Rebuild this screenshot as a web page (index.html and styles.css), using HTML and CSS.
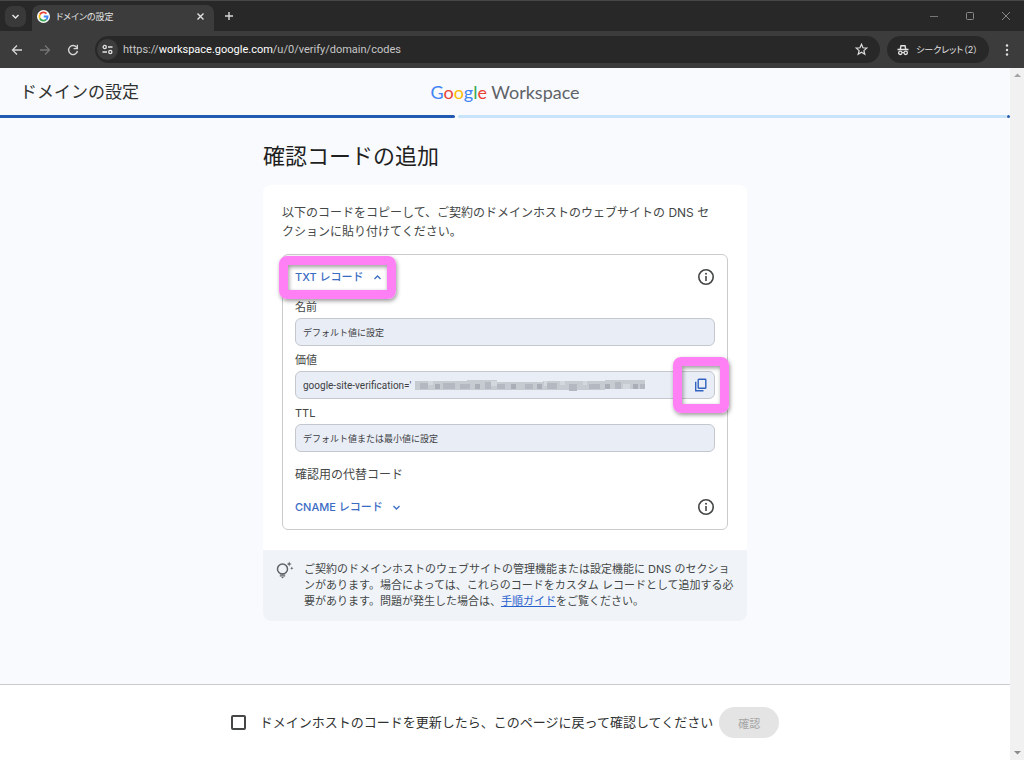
FILE: index.html
```html
<!DOCTYPE html>
<html lang="ja">
<head>
<meta charset="utf-8">
<title>ドメインの設定</title>
<link rel="stylesheet" href="styles.css">
</head>
<body>
<div class="tabstrip">
  <button class="tab-search" aria-label="タブを検索"><svg width="9" height="9" viewBox="0 0 9 9"><path d="M1.500 3l3 3 3-3" fill="none" stroke="#e3e3e3" stroke-width="1.500"/></svg></button>
  <div class="tab">
    <svg class="favicon" width="13" height="13" viewBox="0 0 26 26"><circle cx="13" cy="13" r="13" fill="#fff"/><g fill="none" stroke-width="3.600"><path d="M19 7.400A8.200 8.200 0 0 0 5.800 9" stroke="#ea4335"/><path d="M5.800 9a8.200 8.200 0 0 0 0 8" stroke="#fbbc04"/><path d="M5.800 17a8.200 8.200 0 0 0 12.600 2.300" stroke="#34a853"/><path d="M18.400 19.300A8 8 0 0 0 21.200 13H13.500" stroke="#4285f4"/></g></svg>
    <span class="tab-title">ドメインの設定</span>
    <button class="plain" aria-label="タブを閉じる"><svg width="9" height="9" viewBox="0 0 9 9"><path d="M1.500 1.500l6 6M7.500 1.500l-6 6" stroke="#e3e3e3" stroke-width="1.400"/></svg></button>
  </div>
  <button class="plain new-tab" aria-label="新しいタブ"><svg width="10" height="10" viewBox="0 0 10 10"><path d="M5 1v8M1 5h8" stroke="#d8d8d8" stroke-width="1.400"/></svg></button>
  <div class="window-buttons">
    <button class="plain" aria-label="最小化"><svg width="10" height="10" viewBox="0 0 10 10"><path d="M1 5.500h8" stroke="#777"/></svg></button>
    <button class="plain" aria-label="最大化"><svg width="10" height="10" viewBox="0 0 10 10"><rect x="1.500" y="1.500" width="7" height="7" rx="1" fill="none" stroke="#888"/></svg></button>
    <button class="plain" aria-label="閉じる"><svg width="10" height="10" viewBox="0 0 10 10"><path d="M1 1l8 8M9 1L1 9" stroke="#888"/></svg></button>
  </div>
</div>
<div class="toolbar">
  <div class="nav-buttons">
    <button class="plain" aria-label="戻る"><svg width="12" height="12" viewBox="0 0 12 12"><path d="M11 6H1.800M6 1.500L1.500 6 6 10.500" fill="none" stroke="#d6d6d6" stroke-width="1.300"/></svg></button>
    <button class="plain" aria-label="進む"><svg width="12" height="12" viewBox="0 0 12 12"><path d="M1 6h9.200M6 1.500L10.500 6 6 10.500" fill="none" stroke="#757575" stroke-width="1.300"/></svg></button>
    <button class="plain" aria-label="再読み込み"><svg width="12" height="12" viewBox="0 0 12 12"><path d="M9.800 3.500A4.500 4.500 0 1 0 10.500 7" fill="none" stroke="#d6d6d6" stroke-width="1.400"/><path d="M11 .8v4.400H6.600V4h3.100V.8z" fill="#d6d6d6"/></svg></button>
  </div>
  <div class="address">
    <button class="site-info" aria-label="サイト情報"><svg width="11" height="11" viewBox="0 0 11 11" fill="none" stroke="#e3e3e3" stroke-width="1.300"><circle cx="2.700" cy="3" r="1.600"/><path d="M6 3h4.500M.5 8H5"/><circle cx="8.300" cy="8" r="1.600"/></svg></button>
    <div class="url"><span>https://</span><b>workspace.google.com</b><span>/u/0/verify/domain/codes</span></div>
    <button class="plain" aria-label="ブックマーク"><svg width="13" height="13" viewBox="0 0 13 13"><path d="M6.500 1.300l1.500 3.500 3.800.3-2.900 2.500.9 3.700-3.300-2-3.300 2 .9-3.700L1.200 5.100l3.800-.3z" fill="none" stroke="#dedede" stroke-width="1.200"/></svg></button>
  </div>
  <div class="incognito">
    <svg width="12" height="12" viewBox="0 0 12 12"><path d="M3.300 5L4 1.700h4L8.700 5M.5 5.500h11" fill="none" stroke="#e3e3e3" stroke-width="1.400"/><circle cx="3.300" cy="8.800" r="1.700" fill="none" stroke="#e3e3e3" stroke-width="1.300"/><circle cx="8.700" cy="8.800" r="1.700" fill="none" stroke="#e3e3e3" stroke-width="1.300"/><path d="M5 8.500h2" stroke="#e3e3e3"/></svg>
    <span>シークレット（2）</span>
  </div>
  <button class="plain more" aria-label="メニュー"><svg width="4" height="12" viewBox="0 0 4 12" fill="#e3e3e3"><circle cx="2" cy="1.500" r="1.200"/><circle cx="2" cy="6" r="1.200"/><circle cx="2" cy="10.500" r="1.200"/></svg></button>
</div>
<div class="viewport">
  <div class="page">
    <header class="header">
      <div class="header-title">ドメインの設定</div>
      <div class="logo"><span class="google"><span class="b">G</span><span class="r">o</span><span class="y">o</span><span class="b">g</span><span class="g">l</span><span class="r">e</span></span> Workspace</div>
    </header>
    <div class="progress"><div class="done"></div><div class="rest"></div><div class="dot"></div></div>
    <main class="main">
      <h1>確認コードの追加</h1>
      <section class="card">
        <div class="card-body">
          <p class="intro">以下のコードをコピーして、ご契約のドメインホストのウェブサイトの DNS セ<br>クションに貼り付けてください。</p>
          <div class="records">
            <div class="record-head">
              <button class="record-toggle" aria-expanded="true">TXT レコード<svg width="9" height="9" viewBox="0 0 9 9"><path d="M1.500 6l3-3 3 3" fill="none" stroke="#3a6cc4" stroke-width="1.300"/></svg><span class="highlight"></span></button>
              <button class="plain" aria-label="情報"><svg width="18" height="18" viewBox="0 0 18 18"><circle cx="9" cy="9" r="7.200" fill="none" stroke="#444746" stroke-width="1.600"/><path d="M9 8v5" stroke="#444746" stroke-width="1.600"/><circle cx="9" cy="5.700" r="1" fill="#444746"/></svg></button>
            </div>
            <div class="field-group">
              <label for="name">名前</label>
              <div class="field"><input id="name" readonly value="デフォルト値に設定"></div>
            </div>
            <div class="field-group">
              <label for="value">価値</label>
              <div class="field">
                <input id="value" class="code" readonly value="google-site-verification='">
                <svg class="mosaic" width="232" height="12" viewBox="0 0 232 12">
                  <path fill="#c6cad1" d="M0 2h52v9H0zM52 1h30v10H52zM82 3h46v8H82zM128 2h62v9h-62zM190 1h40v9h-40z"/>
                  <path fill="#b4b8c0" d="M5 4h8v6H5zM28 4h12v6H28zM45 5h10v5H45zM70 3h6v7h-6zM82 5h8v5h-8zM110 5h8v5h-8zM132 4h10v6h-10zM154 5h8v7h-8zM174 5h11v5h-11zM200 3h6v7h-6zM225 5h5v5h-5z"/>
                  <path fill="#d3d7de" d="M13 2h5v4h-5zM76 2h6v5h-6zM129 2h3v5h-3zM145 2h5v4h-5zM168 2h4v4h-4zM208 5h7v5h-7z"/>
                  <path fill="#aaaeb6" d="M20 5h5v5h-5zM60 5h5v5h-5zM96 5h5v5h-5zM122 5h5v5h-5zM190 5h5v5h-5zM218 5h5v5h-5z"/>
                </svg>
                <button class="copy" aria-label="コピー"><svg width="14" height="14" viewBox="0 0 14 14" fill="none" stroke="#3263c0" stroke-width="1.400"><rect x="4.200" y="1.200" width="7.600" height="9.100" rx=".6"/><path d="M1.700 3.800v9h7.800"/></svg><span class="highlight"></span></button>
              </div>
            </div>
            <div class="field-group">
              <label for="ttl">TTL</label>
              <div class="field"><input id="ttl" readonly value="デフォルト値または最小値に設定"></div>
            </div>
            <h2>確認用の代替コード</h2>
            <div class="record-head">
              <button class="record-toggle" aria-expanded="false">CNAME レコード<svg width="9" height="9" viewBox="0 0 9 9"><path d="M1.500 3l3 3 3-3" fill="none" stroke="#3a6cc4" stroke-width="1.300"/></svg></button>
              <button class="plain" aria-label="情報"><svg width="18" height="18" viewBox="0 0 18 18"><circle cx="9" cy="9" r="7.200" fill="none" stroke="#444746" stroke-width="1.600"/><path d="M9 8v5" stroke="#444746" stroke-width="1.600"/><circle cx="9" cy="5.700" r="1" fill="#444746"/></svg></button>
            </div>
          </div>
        </div>
        <div class="tip">
          <svg width="19" height="19" viewBox="0 0 19 19"><circle cx="7.500" cy="8" r="5" fill="none" stroke="#5f6368" stroke-width="1.500"/><path d="M4.800 12.800h5.400M4.800 14.800h5.400" stroke="#5f6368" stroke-width="1.300"/><path d="M6.300 15.900h2.500L7.500 17.500z" fill="#5f6368"/><path d="M14.200.5l.7 1.800 1.800.7-1.800.7-.7 1.800-.7-1.800-1.800-.7 1.800-.7zM16.800 5.600l.5 1.200 1.200.5-1.200.5-.5 1.200-.5-1.200-1.200-.5 1.200-.5z" fill="#5f6368"/></svg>
          <p>ご契約のドメインホストのウェブサイトの管理機能または設定機能に DNS のセクションがあります。場合によっては、これらのコードをカスタム レコードとして追加する必要があります。問題が発生した場合は、<a href="#guide">手順ガイド</a>をご覧ください。</p>
        </div>
      </section>
    </main>
    <footer class="footer">
      <input type="checkbox" id="updated">
      <label for="updated">ドメインホストのコードを更新したら、このページに戻って確認してください</label>
      <button class="confirm" disabled>確認</button>
    </footer>
  </div>
  <div class="scrollbar"><svg width="7" height="5" viewBox="0 0 7 5"><path d="M0 4l3.500-3.500L7 4z" fill="#a3a3a3"/></svg><svg width="7" height="5" viewBox="0 0 7 5"><path d="M0 1l3.500 3.500L7 1z" fill="#8b8b8b"/></svg></div>
</div>
</body>
</html>
```
FILE: styles.css
```css
* { box-sizing: border-box; }

body {
  margin: 0;
  min-height: 100vh;
  display: flex;
  flex-direction: column;
  font-family: Inter, "Noto Sans CJK JP", sans-serif;
  color: #444746;
  background: #282828;
}

button, input { font-family: inherit; }

svg { display: block; flex: none; }

.plain {
  padding: 0;
  border: 0;
  background: none;
}

.tabstrip {
  display: flex;
  align-items: center;
  height: 31px;
  padding: 0 13px 0 5px;
  border-top: 1px solid #474747;
}

.tab-search {
  display: grid;
  place-items: center;
  width: 21px;
  height: 21px;
  padding: 0;
  border: 0;
  border-radius: 7px;
  background: #393939;
}

.tab {
  display: flex;
  align-items: center;
  gap: 6px;
  align-self: flex-end;
  width: 182px;
  height: 26px;
  margin-left: 6px;
  padding: 0 9px 4px 5px;
  border-radius: 8px 8px 0 0;
  background: #3c3c3c;
}

.tab-title {
  flex: 1;
  font-size: 9px;
  font-feature-settings: "palt";
  color: #e3e3e3;
}

.new-tab { margin-left: 10px; }

.window-buttons {
  display: flex;
  gap: 26px;
  margin-left: auto;
}

.toolbar {
  display: flex;
  align-items: center;
  height: 37px;
  padding: 0 15px 0 11px;
  background: #3c3c3c;
}

.nav-buttons {
  display: flex;
  gap: 16px;
  margin-right: 16px;
}

.address {
  display: flex;
  align-items: center;
  flex: 1;
  height: 27px;
  padding: 0 12px 0 2px;
  border-radius: 14px;
  background: #282828;
}

.site-info {
  display: grid;
  place-items: center;
  width: 21px;
  height: 21px;
  padding: 0;
  border: 0;
  border-radius: 50%;
  background: #3c3c3c;
}

.url {
  flex: 1;
  margin-left: 5px;
  font-family: Roboto, sans-serif;
  font-size: 11px;
  color: #c7c7c7;
}

.url b {
  font-weight: 400;
  color: #fff;
}

.incognito {
  display: flex;
  align-items: center;
  gap: 7px;
  width: 102px;
  height: 27px;
  margin-left: 7px;
  padding-left: 10px;
  border-radius: 14px;
  background: #282828;
  font-size: 9px;
  font-feature-settings: "palt";
  white-space: nowrap;
  color: #e3e3e3;
}

.more { margin-left: 16px; }

.viewport {
  flex: 1;
  display: grid;
  grid-template-columns: 1fr 14px;
}

.page {
  display: flex;
  flex-direction: column;
  background: #f8fafd;
}

.scrollbar {
  display: flex;
  flex-direction: column;
  justify-content: space-between;
  align-items: center;
  padding: 5px 0;
  background: #f1f1f1;
}

.header {
  display: grid;
  grid-template-columns: 1fr auto 1fr;
  align-items: center;
  height: 47px;
  padding: 0 20px;
}

.header-title {
  padding-bottom: 2px;
  font-size: 17px;
  color: #303231;
}

.logo {
  font-family: Lato, sans-serif;
  font-size: 18px;
  color: #5f6368;
}

.b { color: #4285f4; }
.r { color: #ea4335; }
.y { color: #fbbc04; }
.g { color: #34a853; }

.progress {
  display: flex;
  align-items: center;
  gap: 3px;
  height: 3px;
}

.done {
  width: 45%;
  height: 3px;
  border-radius: 0 2px 2px 0;
  background: #245bb2;
}

.rest {
  flex: 1;
  height: 3px;
  border-radius: 2px;
  background: #c8e4fa;
}

.dot {
  width: 3px;
  height: 3px;
  margin-left: -3px;
  border-radius: 50%;
  background: #245bb2;
}

.main {
  width: 100%;
  max-width: 484px;
  margin: 0 auto;
  padding: 23px 0;
  flex: 1;
}

h1 {
  margin: 0 0 14px;
  font-size: 22px;
  line-height: 30px;
  font-weight: 400;
  color: #1f1f1f;
}

.card {
  border-radius: 8px;
  background: #fff;
  overflow: hidden;
}

.card-body { padding: 18px 19px 20px; }

.intro {
  margin: 0 0 13px;
  font-size: 12px;
  line-height: 19px;
  white-space: nowrap;
}

.records {
  padding: 10px 12px 11px;
  border: 1px solid #c9cbcd;
  border-radius: 6px;
}

.record-head {
  display: flex;
  align-items: center;
  justify-content: space-between;
  height: 23px;
}

.record-toggle {
  position: relative;
  display: flex;
  align-items: center;
  gap: 9px;
  padding: 1px 0 0;
  border: 0;
  background: none;
  font-size: 11px;
  line-height: 23px;
  font-weight: 500;
  color: #3a6cc4;
}

.highlight {
  position: absolute;
  inset: -9px -14px -10px -16px;
  border: 9px solid #ff80f4;
  border-radius: 8px;
  box-shadow: 1px 2px 4px rgba(0, 0, 0, .4), inset 1px 2px 4px rgba(0, 0, 0, .4);
}

.field-group {
  margin-top: 7px;
  font-size: 11px;
}

.record-head + .field-group { margin-top: 12px; }

.field-group label {
  display: block;
  margin-bottom: 3px;
  line-height: 15px;
}

.field {
  display: flex;
  align-items: center;
  height: 28px;
  padding-left: 7px;
  border: 1px solid #c4c8ce;
  border-radius: 6px;
  background: #e9edf5;
}

.field input {
  flex: 1;
  min-width: 0;
  padding: 0;
  border: 0;
  outline: 0;
  background: none;
  font-size: 9px;
  color: #3c4043;
}

.field .code {
  flex: none;
  width: 112px;
  font-family: Roboto, sans-serif;
  font-size: 10px;
}

.copy {
  position: relative;
  display: grid;
  place-items: center;
  width: 38px;
  height: 38px;
  margin-left: auto;
  margin-right: -6px;
  padding: 0;
  border: 0;
  background: none;
}

.copy .highlight { inset: -9px; }

h2 {
  margin: 14px 0 11px;
  font-size: 12px;
  line-height: 18px;
  font-weight: 400;
}

.tip {
  display: flex;
  gap: 10px;
  padding: 11px 11px 12px 12px;
  background: #f0f4f9;
}

.tip p {
  margin: 0;
  font-size: 11px;
  line-height: 16px;
}

.tip a { color: #2a62cc; }

.footer {
  display: flex;
  align-items: center;
  justify-content: center;
  height: 76px;
  border-top: 1px solid #c9cbcd;
  background: #fff;
  font-size: 13px;
  color: #303231;
}

.footer label { padding-bottom: 2px; }

.footer input {
  appearance: none;
  width: 15px;
  height: 15px;
  margin: 0 14px 0 0;
  border: 2px solid #444746;
  border-radius: 2px;
}

.confirm {
  width: 60px;
  height: 31px;
  margin-left: 6px;
  padding: 0;
  border: 0;
  border-radius: 16px;
  background: #e4e4e4;
  font-size: 11px;
  color: #a6a6a6;
}
```
